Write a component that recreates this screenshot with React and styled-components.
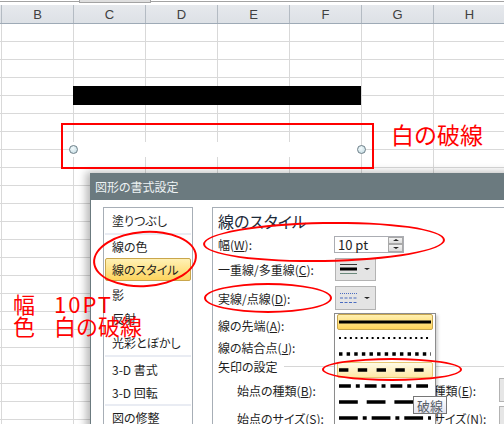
import React from 'react';
import styled, { createGlobalStyle } from 'styled-components';

const JP = `"Noto Sans CJK JP", "Noto Sans", sans-serif`;
const RED = '#ff0000';

const GlobalStyle = createGlobalStyle`
  html, body { margin: 0; padding: 0; background: #fff; }
  body { font-family: ${JP}; }
`;

/* ---------- spreadsheet ---------- */

const Sheet = styled.div`
  position: relative;
  width: 504px;
  height: 424px;
  overflow: hidden;
  background: #fff;
`;

const TopStrip = styled.div`
  display: flex;
  height: 5px;
`;

const StripLine = styled.div`
  flex: ${p => p.$grow ? '1' : '0 0 79px'};
  height: 1px;
  margin-top: 1px;
  background: #a3a3a3;
`;

const TabStub = styled.div`
  flex: 0 0 72px;
  box-sizing: border-box;
  height: 3px;
  background: #dedede;
  border: 1px solid #a3a3a3;
  border-top: none;
`;

const ColHeader = styled.div`
  display: grid;
  grid-template-columns: 2px repeat(7, 72px);
  height: 19px;
  box-sizing: border-box;
  background: linear-gradient(#e6e9ed, #dde1e6);
  border-bottom: 1px solid #9eaab6;
`;

const HeadCell = styled.div`
  box-sizing: border-box;
  border-right: 1px solid #b4bbc3;
  display: flex;
  align-items: center;
  justify-content: center;
  font-family: "Liberation Sans", Arial, sans-serif;
  font-size: 13px;
  color: #404040;
`;

const GridRow = styled.div`
  display: grid;
  grid-template-columns: 2px repeat(7, 72px);
  height: 18px;
`;

const Cell = styled.div`
  box-sizing: border-box;
  border-right: 1px solid #d9d9d9;
  border-bottom: 1px solid #d9d9d9;
`;

/* ---------- shapes on the sheet canvas ---------- */

const BlackBar = styled.div`
  position: absolute;
  left: 73px;
  top: 86px;
  width: 288px;
  height: 19px;
  background: #000;
`;

const WhiteLine = styled.div`
  position: absolute;
  left: 73px;
  top: 142px;
  width: 288px;
  height: 15px;
  background: #fff;
`;

const Handle = styled.div`
  position: absolute;
  left: ${p => p.$x - 4}px;
  top: 145px;
  width: 9px;
  height: 9px;
  box-sizing: border-box;
  border-radius: 50%;
  border: 1px solid #6d7f88;
  background: radial-gradient(circle at 40% 35%, #f4fbfd, #bcd6de);
`;

const RedBox = styled.div`
  position: absolute;
  left: 61px;
  top: 123px;
  width: 313px;
  height: 46px;
  box-sizing: border-box;
  border: 2px solid ${RED};
  z-index: 5;
`;

const Note = styled.div`
  position: absolute;
  left: ${p => p.$x}px;
  top: ${p => p.$y}px;
  font-family: ${JP};
  font-size: ${p => p.$size}px;
  line-height: ${p => p.$size}px;
  color: ${RED};
  white-space: nowrap;
  z-index: 5;
`;

const NoteLine = styled.div`
  display: flex;
`;

const NoteLead = styled.span`
  flex: 0 0 41px;
`;

const NoteWide = styled.span`
  letter-spacing: 2px;
`;

const Ellipse = styled.div`
  position: absolute;
  left: ${p => p.$x}px;
  top: ${p => p.$y}px;
  width: ${p => p.$w}px;
  height: ${p => p.$h}px;
  box-sizing: border-box;
  border: 2px solid ${RED};
  border-radius: 50%;
  transform: rotate(${p => p.$rot || 0}deg);
  z-index: 5;
`;

/* ---------- dialog ---------- */

const Dialog = styled.div`
  position: absolute;
  left: 90px;
  top: 173px;
  width: 430px;
  height: 270px;
  box-shadow: -4px -1px 8px rgba(0, 0, 0, 0.28);
  font-family: ${JP};
  font-feature-settings: "palt";
  color: #1e1e1e;
  z-index: 2;
`;

const TitleBar = styled.div`
  height: 27px;
  display: flex;
  align-items: center;
  padding-left: 5px;
  background: #6b7a7f;
  color: #eef3f4;
  font-size: 12px;
`;

const DialogBody = styled.div`
  display: flex;
  gap: 19px;
  height: 243px;
  padding: 7px 0 0 12px;
  background: #fff;
  border-left: 1px solid #6b7a7f;
`;

const ListPanel = styled.div`
  flex: 0 0 90px;
  box-sizing: border-box;
  border: 1px solid #a7aeb6;
  padding: 0 1px;
  display: flex;
  flex-direction: column;
`;

const ListItem = styled.div`
  height: ${p => p.$h}px;
  box-sizing: border-box;
  display: flex;
  align-items: center;
  padding-left: 6px;
  font-size: 12px;
  white-space: nowrap;
  border: 1px solid ${p => p.$selected ? '#c9a64c' : 'transparent'};
  border-radius: 2px;
  margin: ${p => p.$selected ? '1px 0' : '0'};
  background: ${p => p.$selected ? 'linear-gradient(#fff1b5, #fdd45e)' : 'transparent'};
`;

const ListSep = styled.div`
  height: 2px;
  background: #e9ecf3;
`;

const RightPanel = styled.div`
  flex: 1;
  min-width: 0;
  position: relative;
  border-top: 1px solid #a7aeb6;
  border-left: 1px solid #a7aeb6;
  padding-left: 5px;
`;

const Heading = styled.div`
  height: 26px;
  line-height: 26px;
  font-size: 16px;
  color: #1d2b3a;
`;

const FieldRow = styled.div`
  display: flex;
  align-items: center;
  height: ${p => p.$h}px;
  padding-left: ${p => p.$indent || 0}px;
  font-size: 12px;
  white-space: nowrap;
`;

const FieldLabel = styled.div`
  flex: 0 0 ${p => p.$w}px;
`;

const NumInput = styled.div`
  width: 70px;
  height: 17px;
  box-sizing: border-box;
  border: 1px solid #abadb3;
  display: flex;
  align-items: center;
  padding-left: 3px;
  font-size: 13px;
  background: #fff;
`;

const Spinner = styled.div`
  margin-left: auto;
  width: 15px;
  height: 15px;
  display: flex;
  flex-direction: column;
`;

const SpinHalf = styled.div`
  flex: 1;
  box-sizing: border-box;
  border: 1px solid #a9a9a9;
  background: linear-gradient(#f4f4f4, #dcdcdc);
  display: flex;
  align-items: center;
  justify-content: center;
`;

const Tri = styled.span`
  width: 0;
  height: 0;
  border-left: ${p => p.$size}px solid transparent;
  border-right: ${p => p.$size}px solid transparent;
  ${p => p.$up
    ? `border-bottom: ${p.$size - 1}px solid #222;`
    : `border-top: ${p.$size - 1}px solid #222;`}
`;

const DropButton = styled.div`
  width: 41px;
  height: ${p => p.$h}px;
  margin-left: 1px;
  box-sizing: border-box;
  border: 1px solid #b3b3b3;
  background: #e4e4e4;
  display: flex;
  align-items: center;
  padding-left: 4px;
  gap: 7px;
`;

const SideButton = styled.div`
  width: 20px;
  height: 24px;
  box-sizing: border-box;
  border: 1px solid #b3b3b3;
  background: #e6e6e6;
`;

const Divider = styled.div`
  flex: 1;
  height: 1px;
  margin-left: 6px;
  background: #d6d6d6;
`;

const Menu = styled.div`
  position: absolute;
  left: 121px;
  top: 105px;
  width: 102px;
  height: 125px;
  box-sizing: border-box;
  padding: 0 1px;
  border: 1px solid #8c8c8c;
  background: #fff;
  box-shadow: 2px 2px 3px rgba(0, 0, 0, 0.18);
  z-index: 3;
`;

const MenuItem = styled.div`
  height: 16px;
  box-sizing: border-box;
  margin: 0 1px;
  padding: 0 1px;
  display: flex;
  align-items: center;
  border-radius: 2px;
  border: 1px solid ${p =>
    p.$state === 'selected' ? '#c7a650' : p.$state === 'hover' ? '#e6c873' : 'transparent'};
  background: ${p =>
    p.$state === 'selected'
      ? 'linear-gradient(#fff0b0, #fdd35c)'
      : p.$state === 'hover'
        ? 'linear-gradient(#fffbe6, #ffe9a6)'
        : 'transparent'};
`;

const Tooltip = styled.div`
  position: absolute;
  left: 200px;
  top: 188px;
  height: 18px;
  box-sizing: border-box;
  padding: 0 3px;
  display: flex;
  align-items: center;
  border: 1px solid #767676;
  background: linear-gradient(#ffffff, #e4e5f0);
  color: #575d66;
  font-size: 13px;
  z-index: 4;
`;

/* ---------- drawings ---------- */

const LINE_KINDS = [
  { key: 'solid', dash: null, w: 3 },
  { key: 'round', dash: '2 3.5', w: 2 },
  { key: 'square', dash: '3.5 4.2', w: 3.5 },
  { key: 'dash', dash: '9.5 9.5', w: 3.5 },
  { key: 'dashDot', dash: '12 5 4 5', w: 3.5 },
  { key: 'longDash', dash: '19 9', w: 3.5 },
  { key: 'longDashDot', dash: '19 5 4 5', w: 3.5 },
];

const LineSample = ({ dash, w }) => (
  <svg width="93" height="14" viewBox="0 0 93 14">
    <line x1="0" y1="7" x2="93" y2="7" stroke="#000" strokeWidth={w} strokeDasharray={dash || undefined} />
  </svg>
);

const CompoundIcon = () => (
  <svg width="17" height="14" viewBox="0 0 17 14">
    <line x1="0" y1="2.5" x2="17" y2="2.5" stroke="#333" strokeWidth="1" />
    <line x1="0" y1="7" x2="17" y2="7" stroke="#000" strokeWidth="3" />
    <line x1="0" y1="11.5" x2="17" y2="11.5" stroke="#6b8a7c" strokeWidth="1" />
  </svg>
);

const DashIcon = () => (
  <svg width="17" height="14" viewBox="0 0 17 14">
    <line x1="0" y1="2.5" x2="17" y2="2.5" stroke="#4a6cc0" strokeWidth="1" strokeDasharray="1 1" />
    <line x1="0" y1="7" x2="17" y2="7" stroke="#4a6cc0" strokeWidth="1" strokeDasharray="3 1.5" />
    <line x1="0" y1="11.5" x2="17" y2="11.5" stroke="#4a6cc0" strokeWidth="1" strokeDasharray="3 1.5" />
  </svg>
);

const COLS = ['B', 'C', 'D', 'E', 'F', 'G', 'H'];
const ROWS = Array.from({ length: 23 }, (_, i) => i);

const Key = ({ children }) => <u>{children}</u>;

export default function App() {
  return (
    <>
      <GlobalStyle />
      <Sheet>
        <TopStrip>
          <StripLine />
          <TabStub />
          <StripLine $grow />
        </TopStrip>
        <ColHeader>
          <HeadCell />
          {COLS.map(c => <HeadCell key={c}>{c}</HeadCell>)}
        </ColHeader>
        {ROWS.map(r => (
          <GridRow key={r}>
            <Cell />
            {COLS.map(c => <Cell key={c} />)}
          </GridRow>
        ))}

        <BlackBar />
        <WhiteLine />
        <Handle $x={73} />
        <Handle $x={361} />
        <RedBox />
        <Note $x={391} $y={123} $size={23}>白の破線</Note>

        <Dialog>
          <TitleBar>図形の書式設定</TitleBar>
          <DialogBody>
            <ListPanel>
              <ListItem $h={25}>塗りつぶし</ListItem>
              <ListSep />
              <ListItem $h={22}>線の色</ListItem>
              <ListItem $h={23} $selected>線のスタイル</ListItem>
              <ListItem $h={24}>影</ListItem>
              <ListItem $h={24}>反射</ListItem>
              <ListItem $h={25}>光彩とぼかし</ListItem>
              <ListSep />
              <ListItem $h={24}>3-D 書式</ListItem>
              <ListItem $h={23}>3-D 回転</ListItem>
              <ListSep />
              <ListItem $h={23}>図の修整</ListItem>
            </ListPanel>

            <RightPanel>
              <Heading>線のスタイル</Heading>
              <FieldRow $h={20}>
                <FieldLabel $w={116}>幅(<Key>W</Key>):</FieldLabel>
                <NumInput>
                  10 pt
                  <Spinner>
                    <SpinHalf><Tri $up $size={3} /></SpinHalf>
                    <SpinHalf><Tri $size={3} /></SpinHalf>
                  </Spinner>
                </NumInput>
              </FieldRow>
              <FieldRow $h={30}>
                <FieldLabel $w={116}>一重線/多重線(<Key>C</Key>):</FieldLabel>
                <DropButton $h={23}>
                  <CompoundIcon />
                  <Tri $size={3.5} />
                </DropButton>
              </FieldRow>
              <FieldRow $h={28}>
                <FieldLabel $w={116}>実線/点線(<Key>D</Key>):</FieldLabel>
                <DropButton $h={24}>
                  <DashIcon />
                  <Tri $size={3.5} />
                </DropButton>
              </FieldRow>
              <FieldRow $h={26}>
                <FieldLabel $w={116}>線の先端(<Key>A</Key>):</FieldLabel>
              </FieldRow>
              <FieldRow $h={18}>
                <FieldLabel $w={116}>線の結合点(<Key>J</Key>):</FieldLabel>
              </FieldRow>
              <FieldRow $h={20}>
                矢印の設定
                <Divider />
              </FieldRow>
              <FieldRow $h={28} $indent={19}>
                <FieldLabel $w={161}>始点の種類(<Key>B</Key>):</FieldLabel>
                <FieldLabel $w={101}>終点の種類(<Key>E</Key>):</FieldLabel>
                <SideButton />
              </FieldRow>
              <FieldRow $h={28} $indent={19}>
                <FieldLabel $w={161}>始点のサイズ(<Key>S</Key>):</FieldLabel>
                <FieldLabel $w={101}>終点のサイズ(<Key>N</Key>):</FieldLabel>
                <SideButton />
              </FieldRow>

              <Menu>
                {LINE_KINDS.map((k, i) => (
                  <MenuItem key={k.key} $state={i === 0 ? 'selected' : i === 3 ? 'hover' : undefined}>
                    <LineSample dash={k.dash} w={k.w} />
                  </MenuItem>
                ))}
              </Menu>
              <Tooltip>破線</Tooltip>
            </RightPanel>
          </DialogBody>
        </Dialog>

        <Ellipse $x={93} $y={231} $w={104} $h={56} $rot={-4} />
        <Ellipse $x={203} $y={222} $w={242} $h={40} $rot={-1} />
        <Ellipse $x={204} $y={283} $w={128} $h={30} />
        <Ellipse $x={322} $y={358} $w={140} $h={23} />
        <Note $x={13} $y={292} $size={22}>
          <NoteLine><NoteLead>幅</NoteLead><NoteWide>10PT</NoteWide></NoteLine>
          <NoteLine><NoteLead>色</NoteLead>白の破線</NoteLine>
        </Note>
      </Sheet>
    </>
  );
}
